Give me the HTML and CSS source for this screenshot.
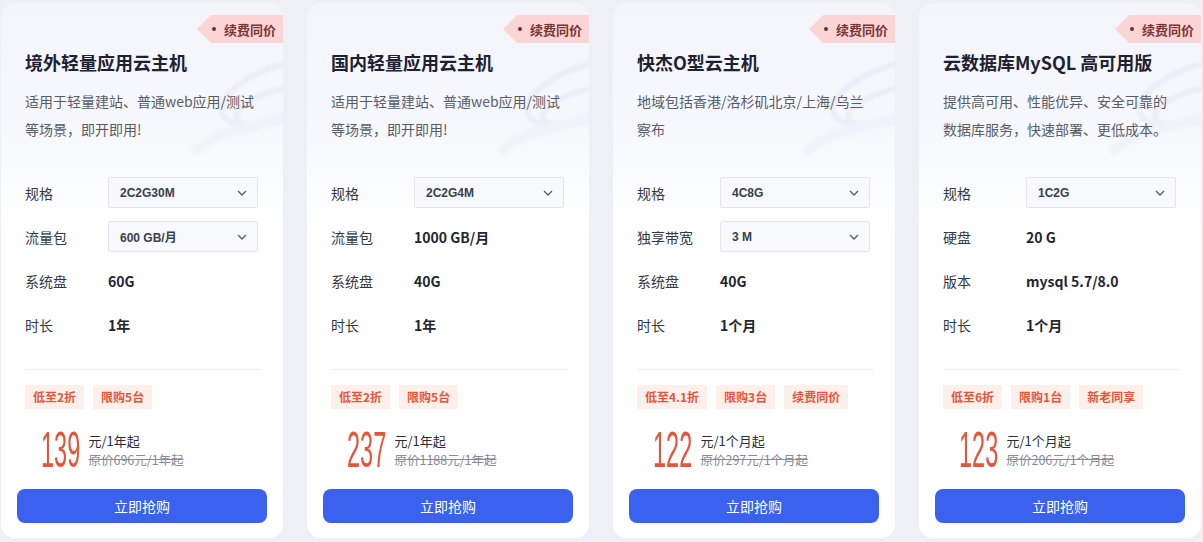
FILE: index.html
```html
<!DOCTYPE html>
<html lang="zh-CN">
<head>
<meta charset="utf-8">
<title>云产品</title>
<link rel="stylesheet" href="styles.css">
</head>
<body>
<div class="cards">
  <div class="card">
    <svg class="deco" viewBox="0 0 120 130" width="120" height="130"><g fill="none" stroke="#dfe5f5" stroke-width="6"><ellipse cx="95" cy="60" rx="60" ry="26" transform="rotate(-20 95 60)"/><ellipse cx="100" cy="72" rx="48" ry="16" transform="rotate(-15 100 72)"/></g><g fill="none" stroke="#e9edf8" stroke-width="10"><path d="M10 120 C40 90 80 100 130 70"/></g></svg>
    <div class="badge"><i class="dot"></i>续费同价</div>
    <h3 class="title">境外轻量应用云主机</h3>
    <p class="desc">适用于轻量建站、普通web应用/测试等场景，即开即用!</p>
    <div class="specs">
      <div class="row"><span class="label">规格</span><div class="select"><span>2C2G30M</span><svg width="10" height="6" viewBox="0 0 10 6"><path d="M1 1 L5 5 L9 1" fill="none" stroke="#555b66" stroke-width="1.3"/></svg></div></div>
      <div class="row"><span class="label">流量包</span><div class="select"><span>600 GB/月</span><svg width="10" height="6" viewBox="0 0 10 6"><path d="M1 1 L5 5 L9 1" fill="none" stroke="#555b66" stroke-width="1.3"/></svg></div></div>
      <div class="row"><span class="label">系统盘</span><span class="value">60G</span></div>
      <div class="row"><span class="label">时长</span><span class="value">1年</span></div>
    </div>
    <div class="divider"></div>
    <div class="tags"><span>低至2折</span><span>限购5台</span></div>
    <div class="price"><span class="num">139</span><div class="ptext"><span class="unit">元/1年起</span><span class="orig">原价696元/1年起</span></div></div>
    <button class="buy">立即抢购</button>
  </div>

  <div class="card">
    <svg class="deco" viewBox="0 0 120 130" width="120" height="130"><g fill="none" stroke="#dfe5f5" stroke-width="6"><ellipse cx="95" cy="60" rx="60" ry="26" transform="rotate(-20 95 60)"/><ellipse cx="100" cy="72" rx="48" ry="16" transform="rotate(-15 100 72)"/></g><g fill="none" stroke="#e9edf8" stroke-width="10"><path d="M10 120 C40 90 80 100 130 70"/></g></svg>
    <div class="badge"><i class="dot"></i>续费同价</div>
    <h3 class="title">国内轻量应用云主机</h3>
    <p class="desc">适用于轻量建站、普通web应用/测试等场景，即开即用!</p>
    <div class="specs">
      <div class="row"><span class="label">规格</span><div class="select"><span>2C2G4M</span><svg width="10" height="6" viewBox="0 0 10 6"><path d="M1 1 L5 5 L9 1" fill="none" stroke="#555b66" stroke-width="1.3"/></svg></div></div>
      <div class="row"><span class="label">流量包</span><span class="value">1000 GB/月</span></div>
      <div class="row"><span class="label">系统盘</span><span class="value">40G</span></div>
      <div class="row"><span class="label">时长</span><span class="value">1年</span></div>
    </div>
    <div class="divider"></div>
    <div class="tags"><span>低至2折</span><span>限购5台</span></div>
    <div class="price"><span class="num">237</span><div class="ptext"><span class="unit">元/1年起</span><span class="orig">原价1188元/1年起</span></div></div>
    <button class="buy">立即抢购</button>
  </div>

  <div class="card">
    <svg class="deco" viewBox="0 0 120 130" width="120" height="130"><g fill="none" stroke="#dfe5f5" stroke-width="6"><ellipse cx="95" cy="60" rx="60" ry="26" transform="rotate(-20 95 60)"/><ellipse cx="100" cy="72" rx="48" ry="16" transform="rotate(-15 100 72)"/></g><g fill="none" stroke="#e9edf8" stroke-width="10"><path d="M10 120 C40 90 80 100 130 70"/></g></svg>
    <div class="badge"><i class="dot"></i>续费同价</div>
    <h3 class="title">快杰O型云主机</h3>
    <p class="desc">地域包括香港/洛杉矶北京/上海/乌兰察布</p>
    <div class="specs">
      <div class="row"><span class="label">规格</span><div class="select"><span>4C8G</span><svg width="10" height="6" viewBox="0 0 10 6"><path d="M1 1 L5 5 L9 1" fill="none" stroke="#555b66" stroke-width="1.3"/></svg></div></div>
      <div class="row"><span class="label">独享带宽</span><div class="select"><span>3 M</span><svg width="10" height="6" viewBox="0 0 10 6"><path d="M1 1 L5 5 L9 1" fill="none" stroke="#555b66" stroke-width="1.3"/></svg></div></div>
      <div class="row"><span class="label">系统盘</span><span class="value">40G</span></div>
      <div class="row"><span class="label">时长</span><span class="value">1个月</span></div>
    </div>
    <div class="divider"></div>
    <div class="tags"><span>低至4.1折</span><span>限购3台</span><span>续费同价</span></div>
    <div class="price"><span class="num">122</span><div class="ptext"><span class="unit">元/1个月起</span><span class="orig">原价297元/1个月起</span></div></div>
    <button class="buy">立即抢购</button>
  </div>

  <div class="card">
    <svg class="deco" viewBox="0 0 120 130" width="120" height="130"><g fill="none" stroke="#dfe5f5" stroke-width="6"><ellipse cx="95" cy="60" rx="60" ry="26" transform="rotate(-20 95 60)"/><ellipse cx="100" cy="72" rx="48" ry="16" transform="rotate(-15 100 72)"/></g><g fill="none" stroke="#e9edf8" stroke-width="10"><path d="M10 120 C40 90 80 100 130 70"/></g></svg>
    <div class="badge"><i class="dot"></i>续费同价</div>
    <h3 class="title">云数据库MySQL 高可用版</h3>
    <p class="desc">提供高可用、性能优异、安全可靠的数据库服务，快速部署、更低成本。</p>
    <div class="specs">
      <div class="row"><span class="label">规格</span><div class="select"><span>1C2G</span><svg width="10" height="6" viewBox="0 0 10 6"><path d="M1 1 L5 5 L9 1" fill="none" stroke="#555b66" stroke-width="1.3"/></svg></div></div>
      <div class="row"><span class="label">硬盘</span><span class="value">20 G</span></div>
      <div class="row"><span class="label">版本</span><span class="value">mysql 5.7/8.0</span></div>
      <div class="row"><span class="label">时长</span><span class="value">1个月</span></div>
    </div>
    <div class="divider"></div>
    <div class="tags"><span>低至6折</span><span>限购1台</span><span>新老同享</span></div>
    <div class="price"><span class="num">123</span><div class="ptext"><span class="unit">元/1个月起</span><span class="orig">原价206元/1个月起</span></div></div>
    <button class="buy">立即抢购</button>
  </div>
</div>
</body>
</html>
```

FILE: styles.css
```css
* { box-sizing: border-box; }
html, body {
  margin: 0;
  padding: 0;
  background: #eef0f5;
}
body {
  font-family: "Microsoft YaHei", "Noto Sans CJK SC", "Noto Sans", sans-serif;
  color: #333;
}
.cards {
  display: flex;
  gap: 24px;
  padding: 3px 0 4px 1px;
}
.card {
  position: relative;
  overflow: hidden;
  flex: 0 0 282px;
  height: 535px;
  border-radius: 14px;
  background: linear-gradient(180deg, #f3f5fb 0%, #f7f8fc 25%, #ffffff 42%, #ffffff 100%);
  display: flex;
  flex-direction: column;
  padding: 47px 24px 15px 24px;
}
.deco {
  position: absolute;
  right: -20px;
  top: 30px;
  opacity: 0.45;
  filter: blur(1px);
}
.badge {
  position: absolute;
  top: 12px;
  right: 0;
  height: 28px;
  width: 86px;
  background: #fbd5d5;
  clip-path: polygon(14px 0, 100% 0, 100% 100%, 14px 100%, 0 50%);
  display: flex;
  align-items: center;
  padding-left: 15px;
  font-size: 13px;
  font-weight: 700;
  color: #7a3434;
}
.badge .dot {
  width: 4px;
  height: 4px;
  border-radius: 50%;
  background: #6e2f2f;
  margin-right: 8px;
}
.title {
  position: relative;
  margin: 0;
  font-size: 18px;
  line-height: 24px;
  font-weight: 700;
  color: #1d2131;
}
.desc {
  position: relative;
  margin: 13px 0 0 0;
  font-size: 14px;
  line-height: 28px;
  height: 56px;
  color: #575c68;
}
.specs {
  margin-top: 34px;
  display: flex;
  flex-direction: column;
  gap: 13px;
}
.row {
  height: 31px;
  display: flex;
  align-items: center;
}
.label {
  width: 83px;
  flex: 0 0 83px;
  font-size: 14px;
  color: #333844;
}
.value {
  font-size: 14px;
  font-weight: 700;
  color: #22262f;
}
.select {
  width: 150px;
  height: 31px;
  border: 1px solid #e1e5ee;
  background: #f8f9fc;
  border-radius: 2px;
  display: flex;
  align-items: center;
  justify-content: space-between;
  padding: 0 10px 0 11px;
  font-size: 12px;
  font-family: "Liberation Sans", "Noto Sans CJK SC", sans-serif;
  font-weight: 700;
  color: #3a3f4b;
}
.select span { font-weight: 600; }
.divider {
  margin-top: 29px;
  margin-right: -3px;
  height: 1px;
  background: #eef0f4;
}
.tags {
  margin-top: 15px;
  display: flex;
  gap: 9px;
}
.tags span {
  height: 24px;
  line-height: 24px;
  padding: 0 8px;
  background: #fdefe9;
  color: #e5553b;
  font-size: 12px;
  font-weight: 700;
}
.price {
  margin-top: 19px;
  height: 42px;
  padding-left: 16px;
  display: flex;
  align-items: center;
  gap: 8px;
}
.num {
  display: inline-block;
  font-family: "Liberation Sans", sans-serif;
  font-size: 50px;
  line-height: 1;
  color: #e5553b;
  transform: scaleX(0.47);
  transform-origin: left center;
  margin-right: -44px;
  padding-top: 2px;
}
.ptext {
  display: flex;
  flex-direction: column;
  padding-top: 1px;
}
.unit {
  font-size: 13px;
  line-height: 19px;
  color: #2a2e38;
}
.orig {
  font-size: 12.5px;
  line-height: 19px;
  color: #878c97;
  text-decoration: line-through;
}
.buy {
  margin: 19px -8px 0 -8px;
  height: 34px;
  border: none;
  border-radius: 8px;
  background: #3a61f0;
  color: #fff;
  font-family: inherit;
  font-size: 14px;
  cursor: pointer;
}
```
